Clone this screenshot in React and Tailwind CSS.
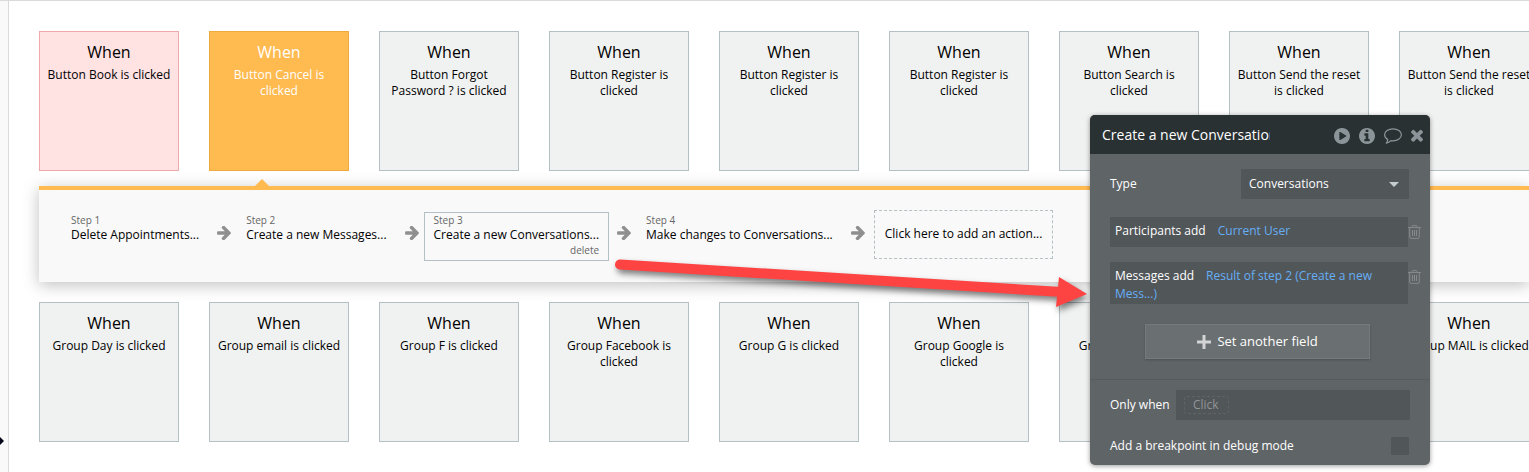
import { useState } from "react";

const topEvents = [
  { label: "Button Book is clicked", tone: "red" },
  { label: "Button Cancel is clicked", tone: "active" },
  { label: "Button Forgot Password ? is clicked" },
  { label: "Button Register is clicked" },
  { label: "Button Register is clicked" },
  { label: "Button Register is clicked" },
  { label: "Button Search is clicked" },
  { label: "Button Send the reset is clicked" },
  { label: "Button Send the reset is clicked" },
];

const bottomEvents = [
  { label: "Group Day is clicked" },
  { label: "Group email is clicked" },
  { label: "Group F is clicked" },
  { label: "Group Facebook is clicked" },
  { label: "Group G is clicked" },
  { label: "Group Google is clicked" },
  { label: "Group H is clicked" },
  { label: "Group I is clicked" },
  { label: "Group MAIL is clicked" },
];

const steps = [
  "Delete Appointments...",
  "Create a new Messages...",
  "Create a new Conversations...",
  "Make changes to Conversations...",
];

const tones = {
  red: "bg-[#ffe2e2] border-[#f0a9a9] text-black",
  active: "bg-[#ffba50] border-[#f0a93c] text-white",
  normal: "bg-[#f0f2f1] border-[#b4c0c3] text-black",
};

// Icons
const ArrowRight = () => (
  <svg viewBox="0 218 1472 1484" className="size-[14px] shrink-0 fill-[#8f8f8f]">
    <path d="M1472 960q0 54-37 91l-651 651q-39 37-91 37-51 0-90-37l-75-75q-38-38-38-91t38-91l293-293H117q-52 0-84.5-37.5T0 1024V896q0-53 32.5-90.5T117 768h704L528 474q-38-36-38-90t38-90l75-75q38-38 90-38 53 0 91 38l651 651q37 35 37 90z" />
  </svg>
);

const PlayCircle = () => (
  <svg viewBox="128 128 1536 1536" className="size-4 fill-current">
    <path d="M896 128q209 0 385.5 103t279.5 279.5 103 385.5-103 385.5-279.5 279.5-385.5 103-385.5-103-279.5-279.5-103-385.5 103-385.5 279.5-279.5 385.5-103zm384 823q32-18 32-55t-32-55l-544-320q-31-19-64-1-32 19-32 56v640q0 37 32 56 16 8 32 8 17 0 32-9z" />
  </svg>
);

const InfoCircle = () => (
  <svg viewBox="128 128 1536 1536" className="size-4 fill-current">
    <path d="M1152 1376v-160q0-14-9-23t-23-9h-96v-512q0-14-9-23t-23-9h-320q-14 0-23 9t-9 23v160q0 14 9 23t23 9h96v320h-96q-14 0-23 9t-9 23v160q0 14 9 23t23 9h448q14 0 23-9t9-23zm-128-896v-160q0-14-9-23t-23-9h-192q-14 0-23 9t-9 23v160q0 14 9 23t23 9h192q14 0 23-9t9-23zm640 416q0 209-103 385.5t-279.5 279.5-385.5 103-385.5-103-279.5-279.5-103-385.5 103-385.5 279.5-279.5 385.5-103 385.5 103 279.5 279.5 103 385.5z" />
  </svg>
);

const Comment = () => (
  <svg viewBox="0 0 18 16" className="h-4 w-[18px] fill-none stroke-current">
    <path
      d="M9 .8c4.700 0 8.400 2.700 8.400 6s-3.700 6-8.400 6c-.7 0-1.400-.1-2-.2-1.300 1.300-2.900 2.200-4.700 2.500.8-.9 1.300-1.800 1.500-3.500C1.800 10.500.6 8.800.6 6.800c0-3.300 3.700-6 8.400-6z"
      strokeWidth="1.2"
      strokeLinejoin="round"
    />
  </svg>
);

const Times = () => (
  <svg viewBox="302 302 1188 1252" className="h-[13px] w-3 fill-current">
    <path d="M1490 1322q0 40-28 68l-136 136q-28 28-68 28t-68-28l-294-294-294 294q-28 28-68 28t-68-28l-136-136q-28-28-28-68t28-68l294-294-294-294q-28-28-28-68t28-68l136-136q28-28 68-28t68 28l294 294 294-294q28-28 68-28t68 28l136 136q28 28 28 68t-28 68l-294 294 294 294q28 28 28 68z" />
  </svg>
);

const Trash = () => (
  <svg viewBox="0 0 13 14" className="h-[14px] w-[13px] fill-none stroke-[#85898b]">
    <path d="M0 2.500h13M4 2.500V1.500Q4 .6 5 .6h3q1 0 1 .9v1M1.700 2.500v9.500q0 1.400 1.400 1.400h6.800q1.400 0 1.400-1.400V2.500M4.500 5v6M6.500 5v6M8.500 5v6" />
  </svg>
);

const EventCard = ({ label, tone = "normal" }) => (
  <button
    className={`flex size-[140px] shrink-0 flex-col items-center border px-[5px] pt-[9px] text-center ${tones[tone]}`}
  >
    <span className="text-[16px] leading-[22px]">When</span>
    <span className="pt-1 text-[12px] leading-[16px]">{label}</span>
  </button>
);

const EventRow = ({ events }) => (
  <div className="flex gap-[30px]">
    {events.map((event, index) => (
      <EventCard key={index} {...event} />
    ))}
  </div>
);

const Step = ({ number, label, selected }) => (
  <div
    className={`mt-[2px] flex h-[49px] shrink-0 flex-col border px-[9px] ${
      selected ? "border-[#b4c0c3]" : "border-transparent"
    }`}
  >
    <span className="text-[10px] leading-[14px] text-[#666]">Step {number}</span>
    <button className="text-left text-[12px] leading-[16px] whitespace-nowrap text-black">
      {label}
    </button>
    {selected && (
      <button className="self-end text-[10px] leading-[14px] text-[#666]">
        delete
      </button>
    )}
  </div>
);

const ActionsPanel = () => (
  <section className="relative mt-[15px] mb-5 h-24 border-t-4 border-[#ffba50] bg-[#f9f9f9] shadow-[0_3px_15px_rgba(0,0,0,0.25)]">
    <svg
      viewBox="0 0 14 7"
      className="absolute -top-[11px] left-[216px] h-[7px] w-[14px] fill-[#ffba50]"
    >
      <path d="M0 7 7 0l7 7z" />
    </svg>
    <div className="flex items-start pt-5 pl-[22px]">
      {steps.map((label, index) => (
        <div key={label} className="flex shrink-0 items-start">
          <Step number={index + 1} label={label} selected={index === 2} />
          <div className="flex pt-4 pr-[5px] pl-2">
            <ArrowRight />
          </div>
        </div>
      ))}
      <button className="ml-1 h-[49px] shrink-0 border border-dashed border-[#b4c0c3] px-[10px] pb-[2px] text-[12px] whitespace-nowrap text-black">
        Click here to add an action...
      </button>
    </div>
  </section>
);

const FieldRow = ({ name, value }) => (
  <div className="flex items-start">
    <div className="min-h-[30px] w-[298px] rounded-[1px] bg-[#515659] px-[5px] pt-[5px] pb-px text-[12px] leading-[18px]">
      <span className="pr-3">{name}</span>
      <a href="#value" className="text-[#66aef5]">
        {value}
      </a>
    </div>
    <button aria-label={`Remove ${name}`} className="pt-2">
      <Trash />
    </button>
  </div>
);

const PropertyEditor = () => {
  const [title, setTitle] = useState("Create a new Conversation...");
  const [breakpoint, setBreakpoint] = useState(false);

  return (
    <aside className="absolute top-[114px] left-[1090px] w-[340px] overflow-hidden rounded-[5px] bg-[#5f6467] text-[12px] text-white shadow-[0_1px_5px_rgba(0,0,0,0.4)]">
      <header className="flex h-[39px] items-center bg-[#293133] pr-[7px] pl-3">
        <input
          aria-label="Action name"
          className="w-[168px] bg-transparent text-[14px] outline-none"
          value={title}
          onChange={(e) => setTitle(e.target.value)}
        />
        <div className="ml-auto flex items-center gap-[9px] pt-[2px] text-[#8b9599]">
          <button aria-label="Run">
            <PlayCircle />
          </button>
          <button aria-label="Info">
            <InfoCircle />
          </button>
          <button aria-label="Comment">
            <Comment />
          </button>
          <button aria-label="Close">
            <Times />
          </button>
        </div>
      </header>

      <div className="flex flex-col gap-[15px] border-b border-[#565b5e] pt-[15px] pb-5 pl-5">
        <div className="flex items-center justify-between pr-[21px] pb-[3px]">
          <label htmlFor="type">Type</label>
          <div className="relative">
            <select
              id="type"
              className="h-[30px] w-[168px] appearance-none rounded-[1px] bg-[#515659] px-2 outline-none"
            >
              <option>Conversations</option>
            </select>
            <svg
              viewBox="0 0 10 5"
              className="pointer-events-none absolute top-[13px] right-[10px] h-[5px] w-[10px] fill-[#c3cdd2]"
            >
              <path d="M0 0h10L5 5z" />
            </svg>
          </div>
        </div>
        <FieldRow name="Participants add" value="Current User" />
        <FieldRow
          name="Messages add"
          value="Result of step 2 (Create a new Mess...)"
        />
        <button className="mt-[5px] ml-[35px] flex h-[35px] w-[225px] items-center justify-center gap-[6px] border border-[#757a7c] bg-[#6a6f71] text-[13px] shadow-[0_1px_2px_rgba(0,0,0,0.2)]">
          <svg viewBox="0 0 14 14" className="size-[14px] fill-[#d2d4d5]">
            <path d="M5.500 0h3v5.500H14v3H8.500V14h-3V8.500H0v-3h5.500z" />
          </svg>
          Set another field
        </button>
      </div>

      <div className="flex flex-col gap-[17px] pt-[10px] pr-5 pb-[10px] pl-5">
        <div className="flex items-center justify-between">
          <label htmlFor="only-when">Only when</label>
          <div className="flex h-[30px] w-[234px] items-center rounded-[1px] bg-[#515659] px-2">
            <input
              id="only-when"
              placeholder="Click"
              className="h-[18px] w-[45px] rounded-[3px] border border-dashed border-[#5f6467] bg-transparent px-2 outline-none placeholder:text-[#929597]"
            />
          </div>
        </div>
        <div className="flex items-center justify-between pr-px">
          <label htmlFor="breakpoint">Add a breakpoint in debug mode</label>
          <input
            id="breakpoint"
            type="checkbox"
            className="size-[18px] appearance-none rounded-[1px] bg-[#515659]"
            checked={breakpoint}
            onChange={(e) => setBreakpoint(e.target.checked)}
          />
        </div>
      </div>
    </aside>
  );
};

const PointerArrow = () => (
  <svg
    viewBox="0 0 490 70"
    className="pointer-events-none absolute top-[249px] left-[606px] h-[70px] w-[490px] drop-shadow-[2px_4px_3px_rgba(0,0,0,0.5)]"
  >
    <path d="M14 14.500 456 42" stroke="#fe4343" strokeWidth="10" strokeLinecap="round" />
    <path d="M453 27 481 44 450 57z" fill="#fe4343" />
  </svg>
);

const App = () => (
  <div className="relative flex min-h-screen overflow-hidden border-t border-[#dadada] bg-white font-['Open_Sans',sans-serif]">
    <div className="relative w-[9px] shrink-0 border-r border-[#dadada] bg-[#f9f9f9]">
      <svg
        viewBox="0 0 4 8"
        className="absolute bottom-[27px] left-0 h-2 w-1 fill-[#06061a]"
      >
        <path d="M0 0 4 4 0 8z" />
      </svg>
    </div>
    <main className="min-w-0 flex-1 overflow-hidden pt-[30px] pb-[30px] pl-[30px]">
      <EventRow events={topEvents} />
      <ActionsPanel />
      <EventRow events={bottomEvents} />
    </main>
    <PointerArrow />
    <PropertyEditor />
  </div>
);

export default App;
